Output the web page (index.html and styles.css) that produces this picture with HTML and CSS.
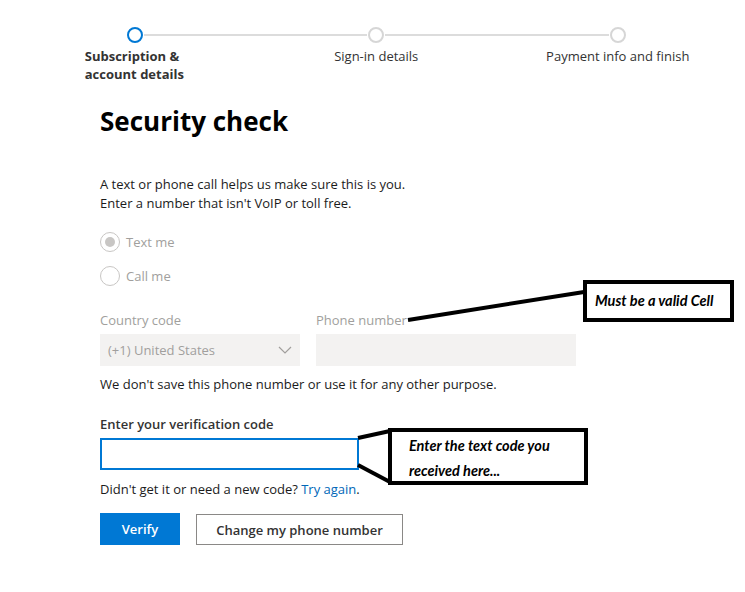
FILE: index.html
```html
<!DOCTYPE html>
<html lang="en">
<head>
<meta charset="utf-8">
<title>Security check</title>
<link rel="stylesheet" href="styles.css">
</head>
<body>
<div class="page">
  <ol class="steps">
    <li class="step active"><span class="dot"></span><span class="step-label strong">Subscription &amp; account details</span></li>
    <li class="step"><span class="dot"></span><span class="step-label">Sign-in details</span></li>
    <li class="step last"><span class="dot"></span><span class="step-label">Payment info and finish</span></li>
  </ol>

  <main class="form">
    <h1 class="title">Security check</h1>
    <p class="intro">A text or phone call helps us make sure this is you.<br>Enter a number that isn't VoIP or toll free.</p>

    <div class="radios">
      <label class="radio"><span class="radio-circle checked"></span><span>Text me</span></label>
      <label class="radio"><span class="radio-circle"></span><span>Call me</span></label>
    </div>

    <div class="phone-row">
      <div class="field country">
        <span class="field-label muted">Country code</span>
        <div class="select">
          <span>(+1) United States</span>
          <svg class="chev" width="14" height="8" viewBox="0 0 14 8"><path d="M1 1l6 6 6-6" fill="none" stroke="#a19f9d" stroke-width="1.2"/></svg>
        </div>
      </div>
      <div class="field phone">
        <span class="field-label muted">Phone number</span>
        <div class="input disabled"></div>
      </div>
    </div>

    <p class="note">We don't save this phone number or use it for any other purpose.</p>

    <div class="field code">
      <span class="field-label dark">Enter your verification code</span>
      <div class="input active"></div>
    </div>

    <p class="retry">Didn't get it or need a new code? <a href="#">Try again</a>.</p>

    <div class="actions">
      <button class="btn primary">Verify</button>
      <button class="btn secondary">Change my phone number</button>
    </div>
  </main>

  <svg class="pointers" width="745" height="592" viewBox="0 0 745 592">
    <path d="M408 320 L584 292" stroke="#000" stroke-width="4" fill="none"/>
    <path d="M358 438 L390 431" stroke="#000" stroke-width="4" fill="none"/>
    <path d="M358 465 L390 482" stroke="#000" stroke-width="4" fill="none"/>
  </svg>
  <div class="callout callout-cell">Must be a valid Cell</div>
  <div class="callout callout-code">Enter the text code you<br>received here...</div>
</div>
</body>
</html>
```

FILE: styles.css
```css
* { box-sizing: border-box; }
html, body { margin: 0; padding: 0; background: #fff; }
body {
  font-family: "Open Sans", "Noto Sans", sans-serif;
  font-size: 13px;
  color: #1b1b1b;
  width: 745px;
  height: 592px;
  overflow: hidden;
}
.page { position: relative; width: 745px; height: 592px; }

/* progress steps */
.steps {
  list-style: none;
  margin: 0;
  padding: 27px 0 0 14px;
  display: grid;
  grid-template-columns: repeat(3, 241.5px);
}
.step {
  position: relative;
  display: flex;
  flex-direction: column;
  align-items: center;
}
.step::after {
  content: "";
  position: absolute;
  top: 7px;
  left: calc(50% + 9px);
  width: calc(100% - 18px);
  height: 2px;
  background: #dcdcdc;
}
.step.last::after { display: none; }
.dot {
  width: 16px;
  height: 16px;
  border-radius: 50%;
  border: 2px solid #d6d6d6;
  background: #fff;
}
.step.active .dot { border-color: #0078d4; }
.step-label {
  margin-top: 4px;
  width: 110px;
  text-align: center;
  line-height: 18px;
  color: #333;
  white-space: nowrap;
}
.step-label.strong {
  white-space: normal;
  font-weight: 700;
  text-align: left;
  padding-left: 5px;
}
.step:not(.active) .step-label { width: auto; }

/* form */
.form { padding: 20px 0 0 100px; }
.title {
  margin: 0;
  font-family: "Open Sans", sans-serif;
  font-size: 26px;
  font-weight: 700;
  line-height: 36px;
  color: #000;
}
.intro {
  margin: 36px 0 0;
  line-height: 19px;
  font-size: 13px;
}
.radios {
  margin-top: 19px;
  display: flex;
  flex-direction: column;
  gap: 14px;
}
.radio {
  display: flex;
  align-items: center;
  gap: 6px;
  color: #a19f9d;
  font-size: 13px;
  line-height: 20px;
}
.radio-circle {
  width: 20px;
  height: 20px;
  border-radius: 50%;
  border: 1px solid #c8c6c4;
  display: flex;
  align-items: center;
  justify-content: center;
}
.radio-circle.checked::after {
  content: "";
  width: 10px;
  height: 10px;
  border-radius: 50%;
  background: #c8c6c4;
}

.phone-row {
  margin-top: 24px;
  display: flex;
  gap: 16px;
}
.field { display: flex; flex-direction: column; }
.field-label { line-height: 20px; margin-bottom: 4px; }
.field-label.muted { color: #a19f9d; }
.field-label.dark { color: #333; font-weight: 600; }
.country { width: 200px; }
.phone { width: 260px; }
.select {
  height: 32px;
  background: #f3f2f1;
  color: #a19f9d;
  display: flex;
  align-items: center;
  justify-content: space-between;
  padding: 0 8px 0 8px;
}
.input { height: 32px; }
.input.disabled { background: #f3f2f1; }
.note { margin: 9px 0 0; line-height: 19px; }

.code { margin-top: 20px; }
.code .input {
  width: 259px;
  height: 32px;
  border: 2px solid #0078d4;
}
.retry { margin: 9px 0 0; line-height: 20px; }
.retry a { color: #0067b8; text-decoration: none; }

.actions { margin-top: 14px; display: flex; gap: 16px; align-items: flex-start; }
.btn {
  font-family: "Open Sans", sans-serif;
  font-size: 13px;
  font-weight: 600;
  height: 32px;
  padding: 0;
  border-radius: 0;
  cursor: pointer;
  white-space: nowrap;
}
.btn.primary {
  width: 80px;
  background: #0078d4;
  border: none;
  color: #fff;
}
.btn.secondary {
  width: 207px;
  background: #fff;
  border: 1px solid #8a8886;
  color: #333;
  margin-top: 1px;
  height: 31px;
}

/* annotation overlay */
.pointers { position: absolute; left: 0; top: 0; pointer-events: none; }
.callout {
  position: absolute;
  border: 4px solid #000;
  background: #fff;
  font-family: "Lato", "Open Sans", sans-serif;
  font-style: italic;
  font-weight: 700;
  font-size: 14.5px;
  color: #000;
  white-space: nowrap;
}
.callout-cell {
  left: 583px;
  top: 280px;
  width: 151px;
  height: 42px;
  padding: 5px 0 0 8px;
  line-height: 24px;
}
.callout-code {
  left: 388px;
  top: 428px;
  width: 200px;
  height: 57px;
  padding: 1px 0 0 17px;
  line-height: 25px;
}
```
